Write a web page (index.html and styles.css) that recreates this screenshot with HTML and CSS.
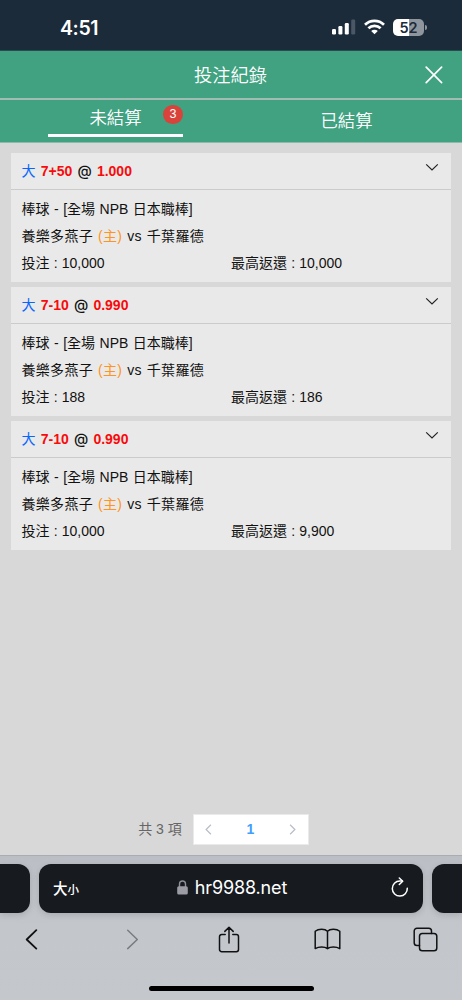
FILE: index.html
```html
<!DOCTYPE html>
<html lang="zh-Hant">
<head>
<meta charset="utf-8">
<meta name="viewport" content="width=device-width, initial-scale=1">
<title>投注紀錄</title>
<link rel="stylesheet" href="styles.css">
</head>
<body>
<div class="phone">
  <div class="status">
    <span class="clock">4:51</span>
    <div class="status-icons">
      <svg class="signal" width="24" height="16" viewBox="0 0 24 16" fill="#fff"><rect x="0" y="10" width="4" height="5.5" rx="1.2"/><rect x="6.4" y="7" width="4" height="8.5" rx="1.2"/><rect x="12.8" y="4" width="4" height="11.5" rx="1.2"/><rect x="19.2" y="0.5" width="4" height="15" rx="1.2" fill="#4a5764"/></svg>
      <svg class="wifi" width="21" height="16" viewBox="0 0 21 16" fill="none" stroke="#fff" stroke-width="2.7"><path d="M1 5.7a13.6 13.6 0 0 1 19 0"/><path d="M4.4 9.3a8.7 8.7 0 0 1 12.2 0"/><path d="M10.5 15.2 7.2 12a4.7 4.7 0 0 1 6.6 0z" fill="#fff" stroke="none"/></svg>
      <div class="battery"><span class="level"><b>5</b><b>2</b></span><i></i></div>
    </div>
  </div>
  <header class="title-bar">
    <h1>投注紀錄</h1>
    <svg class="close" width="18" height="18" viewBox="0 0 18 18" fill="none" stroke="#fff" stroke-width="1.7" stroke-linecap="round"><path d="M1.2 1.2 16.6 16.6M16.6 1.2 1.2 16.6"/></svg>
  </header>
  <nav class="tabs">
    <div class="tab"><div class="tab-active">未結算<span class="badge">3</span></div></div>
    <div class="tab tab-idle">已結算</div>
  </nav>
  <main>
    <article class="card">
      <div class="pick"><div><span class="side">大</span> <span class="red">7+50</span> <span class="at">@</span> <span class="red">1.000</span></div><svg class="chevron" width="14" height="9" viewBox="0 0 14 9"><path d="M1.2 1.4 7 7l5.8-5.6"/></svg></div>
      <div class="detail">
        <p class="league">棒球 - [全場 NPB 日本職棒]</p>
        <p class="match">養樂多燕子 <span class="home">(主)</span> vs 千葉羅德</p>
        <div class="amounts"><span>投注 : 10,000</span><span>最高返還 : 10,000</span></div>
      </div>
    </article>
    <article class="card">
      <div class="pick"><div><span class="side">大</span> <span class="red">7-10</span> <span class="at">@</span> <span class="red">0.990</span></div><svg class="chevron" width="14" height="9" viewBox="0 0 14 9"><path d="M1.2 1.4 7 7l5.8-5.6"/></svg></div>
      <div class="detail">
        <p class="league">棒球 - [全場 NPB 日本職棒]</p>
        <p class="match">養樂多燕子 <span class="home">(主)</span> vs 千葉羅德</p>
        <div class="amounts"><span>投注 : 188</span><span>最高返還 : 186</span></div>
      </div>
    </article>
    <article class="card">
      <div class="pick"><div><span class="side">大</span> <span class="red">7-10</span> <span class="at">@</span> <span class="red">0.990</span></div><svg class="chevron" width="14" height="9" viewBox="0 0 14 9"><path d="M1.2 1.4 7 7l5.8-5.6"/></svg></div>
      <div class="detail">
        <p class="league">棒球 - [全場 NPB 日本職棒]</p>
        <p class="match">養樂多燕子 <span class="home">(主)</span> vs 千葉羅德</p>
        <div class="amounts"><span>投注 : 10,000</span><span>最高返還 : 9,900</span></div>
      </div>
    </article>
    <div class="pagination">
      <span class="total">共 3 項</span>
      <div class="pager">
        <svg width="7" height="11" viewBox="0 0 7 11"><path d="M5.9.8 1.1 5.5l4.8 4.7"/></svg>
        <b>1</b>
        <svg width="7" height="11" viewBox="0 0 7 11"><path d="M1.1.8 5.9 5.5 1.1 10.2"/></svg>
      </div>
    </div>
  </main>
  <footer class="browser">
    <div class="address-row">
      <div class="side-tab left"></div>
      <div class="address">
        <span class="text-size">大<small>小</small></span>
        <div class="url"><svg width="11" height="15" viewBox="0 0 11 15"><path d="M2.5 7V4a3 3 0 0 1 6 0v3" fill="none" stroke="#8f9097" stroke-width="1.4"/><rect x=".2" y="6.2" width="10.6" height="8.4" rx="1.6" fill="#9b9ca4"/></svg><span>hr9988.net</span></div>
        <svg class="reload" width="18" height="20" viewBox="0 0 18 20" fill="none" stroke="#fff" stroke-width="1.5" stroke-linecap="round" stroke-linejoin="round"><path d="M16.3 11.3A7.5 7.5 0 1 1 8.8 4.1h2.5"/><path d="m8.3 1 3.4 3.2-3.4 3.3"/></svg>
      </div>
      <div class="side-tab right"></div>
    </div>
    <div class="toolbar">
      <svg width="13" height="21" viewBox="0 0 13 21"><path d="M11.3 1.2 1.7 10.5l9.6 9.1" stroke-width="1.8"/></svg>
      <svg class="muted" width="13" height="21" viewBox="0 0 13 21"><path d="m1.7 1.2 9.6 9.3-9.6 9.1"/></svg>
      <svg width="22" height="27" viewBox="0 0 22 27"><path d="M7.2 8.5H3.7a2.2 2.2 0 0 0-2.2 2.2v12.8a2.2 2.2 0 0 0 2.2 2.2h14.6a2.2 2.2 0 0 0 2.2-2.2V10.7a2.2 2.2 0 0 0-2.2-2.2h-3.5M11 17V1.5M6.8 5.4 11 1.2l4.2 4.2"/></svg>
      <svg width="27" height="22" viewBox="0 0 27 22"><path d="M13.5 3.2v17.5M13.5 3.2C11 .5 4.5.4 1.2 3.2v17.4c3.5-2 9.5-2.1 12.3.1 2.8-2.2 8.8-2.1 12.3-.1V3.2c-3.3-2.8-9.8-2.7-12.3 0z"/></svg>
      <svg width="25" height="25" viewBox="0 0 25 25"><path d="M6.5 18.5H4A2.8 2.8 0 0 1 1.2 15.7V4A2.8 2.8 0 0 1 4 1.2h11.7A2.8 2.8 0 0 1 18.5 4v2.5"/><rect x="6.5" y="6.5" width="17.3" height="17.3" rx="2.8"/></svg>
    </div>
    <div class="home-bar"></div>
  </footer>
</div>
</body>
</html>
```
FILE: styles.css
```css
* { box-sizing: border-box; }
body { margin: 0; font-family: "Liberation Sans", "Noto Sans CJK TC", sans-serif; }
svg { display: block; flex: none; }
h1, p { margin: 0; font-weight: 400; }
.phone { width: 462px; height: 1000px; display: flex; flex-direction: column; overflow: hidden; background: #d8d8d8; }
.status { height: 51px; flex: none; background: #1c2b3a; border-bottom: 1px solid #294b51; color: #fff; display: flex; justify-content: space-between; align-items: center; padding: 4px 35px 0 60px; }
.clock { font: 600 19.5px/24px Inter, sans-serif; letter-spacing: -.4px; padding-top: 2px; }
.status-icons { display: flex; align-items: center; gap: 8px; }
.battery { display: flex; align-items: center; gap: 1px; }
.level { width: 31px; height: 17px; border-radius: 5px; background: linear-gradient(90deg, #fff 52%, #8e959d 52%); display: flex; align-items: center; justify-content: center; font: 600 14.5px/17px Inter, sans-serif; color: #1c2b3a; letter-spacing: -.2px; }
.level b { font-weight: 600; }
.battery i { width: 2px; height: 5px; border-radius: 0 2px 2px 0; background: #8e959d; }
.title-bar { height: 49px; flex: none; background: #40a280; border-bottom: 2px solid #a1bcb2; color: #fff; display: grid; grid-template-columns: 1fr 18px; align-items: center; padding: 0 19px 0 36px; }
.title-bar h1 { font: 350 18.3px/24px "Noto Sans CJK TC", sans-serif; text-align: center; padding-bottom: 2px; }
.tabs { height: 43px; flex: none; display: flex; background: #40a280; border-bottom: 1px solid #8bbba9; color: #fff; font-size: 17.4px; font-weight: 350; }
.tab { flex: 1; display: flex; justify-content: center; }
.tab-active { position: relative; width: 135px; height: 37px; border-bottom: 3px solid #fff; text-align: center; line-height: 36px; }
.tab-idle { line-height: 42px; }
.badge { position: absolute; right: 0; top: 5px; width: 20px; height: 19px; border-radius: 10px; background: #d8433b; font-size: 12.5px; line-height: 19px; }
main { flex: 1; display: flex; flex-direction: column; gap: 5px; padding: 10px 11px; }
.card { height: 129px; background: #e9e9e9; color: #111; font-size: 14px; }
.pick { height: 37px; border-bottom: 1px solid #cbcbcb; padding: 0 12px 0 10.5px; display: flex; justify-content: space-between; font-weight: 700; line-height: 36px; word-spacing: 1.3px; }
.side { color: #0865ff; font-weight: 400; }
.red { color: #f80b0b; }
.at { font-family: Inter, sans-serif; font-weight: 500; font-size: 14.5px; line-height: 1; }
.chevron { margin-top: 9.5px; fill: none; stroke: #222; stroke-width: 1.2; }
.detail { padding: 6px 10.5px; line-height: 27px; }
.detail p { height: 27px; white-space: nowrap; }
.league { word-spacing: .6px; }
.match { letter-spacing: .3px; word-spacing: .8px; }
.home { color: #ff941f; }
.amounts { display: grid; grid-template-columns: 209.5px 1fr; white-space: nowrap; word-spacing: .3px; }
.pagination { margin-top: auto; height: 31px; display: flex; justify-content: center; align-items: center; gap: 11px; padding-right: 15px; font-size: 14px; color: #666; }
.total { padding-bottom: 4px; }
.pager { width: 116px; height: 31px; background: #fff; border: 1px solid #eaeaea; display: flex; align-items: center; justify-content: space-between; padding: 0 12px 1px 11px; }
.pager svg { fill: none; stroke: #b8bdc6; stroke-width: 1.2; }
.pager b { color: #409eff; font-size: 14px; }
.browser { height: 145px; flex: none; border-top: 1px solid #a9acb1; background: linear-gradient(#bbbec4, #c3c7cc 50%, #c4c8cd); display: flex; flex-direction: column; align-items: center; }
.address-row { width: 100%; height: 49px; margin-top: 7.5px; display: flex; gap: 9px; }
.side-tab, .address { background: #171b20; box-shadow: 0 2px 6px #0002; }
.side-tab { width: 30px; }
.left { border-radius: 0 12px 12px 0; }
.right { border-radius: 12px 0 0 12px; }
.address { width: 384px; border-radius: 12px; color: #fff; display: grid; grid-template-columns: 60px 1fr 60px; align-items: center; padding: 0 14px 1px 14px; }
.text-size { font-size: 14.5px; font-weight: 500; white-space: nowrap; }
.text-size small { font-size: 11.5px; font-weight: 500; }
.url { display: flex; align-items: center; justify-content: center; gap: 7px; font: 18px/24px Inter, sans-serif; letter-spacing: -.15px; padding-left: 2px; }
.reload { justify-self: end; margin-bottom: 2px; }
.toolbar { width: 100%; height: 53px; display: grid; grid-template-columns: 13px 13px 22px 27px 25px; column-gap: 0; align-items: center; padding-left: 25px; column-gap: 0; }
.toolbar { display: flex; }
.toolbar svg { fill: none; stroke: #111; stroke-width: 1.5; stroke-linecap: round; stroke-linejoin: round; }
.toolbar svg:nth-child(2) { margin-left: 88px; }
.toolbar svg:nth-child(3) { margin-left: 79px; }
.toolbar svg:nth-child(4) { margin-left: 74px; }
.toolbar svg:nth-child(5) { margin-left: 72px; }
.toolbar .muted { stroke: #797c80; }
.home-bar { width: 165px; height: 5px; border-radius: 3px; background: #000; margin-top: 20px; }
```
